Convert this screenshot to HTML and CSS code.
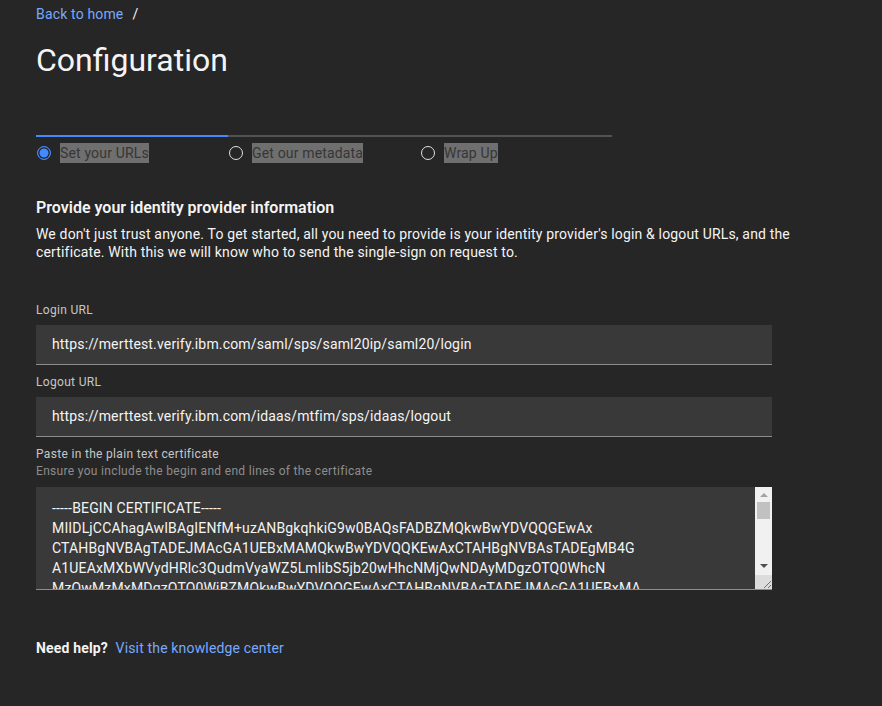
FILE: index.html
```html
<!DOCTYPE html>
<html lang="en">
<head>
<meta charset="utf-8">
<title>Configuration</title>
<link rel="stylesheet" href="styles.css">
</head>
<body>
<main class="page">
  <nav class="breadcrumb">
    <a class="link" href="#">Back to home</a>
    <span class="sep">/</span>
  </nav>
  <h1 class="title">Configuration</h1>

  <div class="stepper">
    <div class="step active">
      <div class="bar"></div>
      <div class="step-label"><span class="radio"></span><span class="step-text">Set your URLs</span></div>
    </div>
    <div class="step">
      <div class="bar"></div>
      <div class="step-label"><span class="radio"></span><span class="step-text">Get our metadata</span></div>
    </div>
    <div class="step">
      <div class="bar"></div>
      <div class="step-label"><span class="radio"></span><span class="step-text">Wrap Up</span></div>
    </div>
  </div>

  <h2 class="section-title">Provide your identity provider information</h2>
  <p class="intro">We don't just trust anyone. To get started, all you need to provide is your identity provider's login &amp; logout URLs, and the certificate. With this we will know who to send the single-sign on request to.</p>

  <div class="field first">
    <label class="label">Login URL</label>
    <div class="input">https://merttest.verify.ibm.com/saml/sps/saml20ip/saml20/login</div>
  </div>
  <div class="field">
    <label class="label">Logout URL</label>
    <div class="input">https://merttest.verify.ibm.com/idaas/mtfim/sps/idaas/logout</div>
  </div>
  <div class="field">
    <label class="label">Paste in the plain text certificate</label>
    <div class="helper">Ensure you include the begin and end lines of the certificate</div>
    <div class="textarea-wrap">
      <textarea class="textarea" spellcheck="false">-----BEGIN CERTIFICATE-----
MIIDLjCCAhagAwIBAgIENfM+uzANBgkqhkiG9w0BAQsFADBZMQkwBwYDVQQGEwAx
CTAHBgNVBAgTADEJMAcGA1UEBxMAMQkwBwYDVQQKEwAxCTAHBgNVBAsTADEgMB4G
A1UEAxMXbWVydHRlc3QudmVyaWZ5LmlibS5jb20wHhcNMjQwNDAyMDgzOTQ0WhcN
MzQwMzMxMDgzOTQ0WjBZMQkwBwYDVQQGEwAxCTAHBgNVBAgTADEJMAcGA1UEBxMA
MQkwBwYDVQQKEwAxCTAHBgNVBAsTADEgMB4GA1UEAxMXbWVydHRlc3QudmVyaWZ5
LmlibS5jb20wggEiMA0GCSqGSIb3DQEBAQUAA4IBDwAwggEKAoIBAQCq
-----END CERTIFICATE-----</textarea>
      <div class="scrollbar">
        <span class="arrow up"></span>
        <span class="thumb"></span>
        <span class="arrow down"></span>
        <span class="grip">
          <svg width="12" height="12" viewBox="0 0 12 12"><path d="M11 4 L4 11 M11 8 L8 11" stroke="#6f6f6f" stroke-width="1"/></svg>
        </span>
      </div>
    </div>
  </div>

  <p class="help"><strong>Need help?</strong> <a class="link" href="#">Visit the knowledge center</a></p>
</main>
</body>
</html>
```
FILE: styles.css
```css
* { box-sizing: border-box; }
html, body { margin: 0; padding: 0; }
body {
  background: #262626;
  color: #f4f4f4;
  font-family: Roboto, "Noto Sans", sans-serif;
  letter-spacing: 0.16px;
  width: 882px;
  height: 706px;
  overflow: hidden;
}
.page { padding: 5px 0 0 36px; }
.link { color: #78a9ff; text-decoration: none; }
.breadcrumb { font-size: 14px; line-height: 18px; display: flex; gap: 9px; }
.sep { color: #f4f4f4; }
.title {
  margin: 17px 0 0 0;
  font-size: 32px;
  line-height: 40px;
  font-weight: 400;
  letter-spacing: 0;
}
.stepper { display: flex; width: 576px; margin-top: 55px; }
.step { flex: 1; }
.bar { height: 2px; background: #525252; }
.step.active .bar { background: #4589ff; }
.step-label { display: flex; align-items: center; gap: 9px; margin-top: 6px; padding-left: 1px; }
.radio {
  width: 14px; height: 14px; border-radius: 50%;
  border: 1.5px solid #e0e0e0; flex: none;
}
.step.active .radio {
  border-color: #4589ff;
  background: #4589ff;
  box-shadow: inset 0 0 0 1.5px #262626;
}
.step-text {
  background: #6f6f6f; color: #363636;
  font-size: 14px; line-height: 20px; padding: 0;
}
.section-title { font-size: 16px; line-height: 22px; font-weight: 600; margin: 34px 0 0 0; letter-spacing: 0; }
.intro { font-size: 14px; line-height: 18px; margin: 6px 0 0 0; width: 800px; }
.field { display: flex; flex-direction: column; width: 736px; }
.field.first { margin-top: 41px; }
.label { font-size: 12px; line-height: 16px; color: #c6c6c6; margin-bottom: 7px; letter-spacing: 0.32px; }
.field + .field { margin-top: 9px; }
.helper { font-size: 12px; line-height: 16px; color: #8d8d8d; margin: -6px 0 8px 0; letter-spacing: 0.32px; }
.input {
  height: 40px; background: #393939; border-bottom: 1px solid #8d8d8d;
  font-size: 14px; line-height: 39px; padding: 0 16px; color: #f4f4f4;
}
.textarea-wrap { position: relative; width: 736px; height: 103px; }
.textarea {
  display: block; width: 736px; height: 103px;
  background: #393939; color: #f4f4f4; border: none; border-bottom: 1px solid #8d8d8d;
  font-family: inherit; font-size: 14px; line-height: 20px; padding: 11px 16px;
  letter-spacing: 0.16px;
  resize: none; outline: none; margin: 0; overflow: hidden;
}
.scrollbar {
  position: absolute; top: 0; right: 0; width: 17px; height: 102px;
  background: #f1f1f1; display: flex; flex-direction: column; align-items: center;
}
.arrow { width: 0; height: 0; border-left: 4px solid transparent; border-right: 4px solid transparent; }
.arrow.up { border-bottom: 4px solid #a3a3a3; margin-top: 6px; }
.thumb { width: 13px; height: 17px; background: #c1c1c1; margin-top: 5px; }
.arrow.down { border-top: 4px solid #505050; margin-top: 45px; }
.grip { width: 17px; height: 14px; background: #dcdcdc; margin-top: auto; display: flex; justify-content: flex-end; align-items: flex-end; }
.grip svg { display: block; }
.help { font-size: 14px; line-height: 18px; margin: 49px 0 0 0; }
.help strong { font-weight: 700; margin-right: 4px; }
```
